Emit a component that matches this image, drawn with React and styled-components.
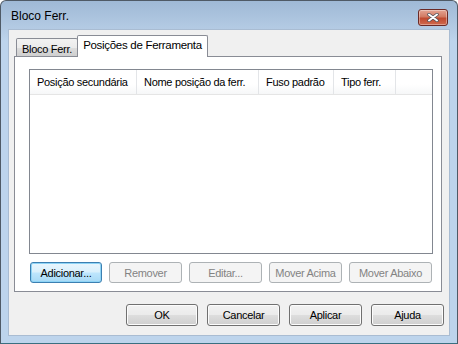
import styled, { createGlobalStyle, css } from 'styled-components';

const Global = createGlobalStyle`
  html, body { margin: 0; padding: 0; background: #ffffff; }
  body {
    font-family: "Liberation Sans", Arial, sans-serif;
    font-size: 11px;
    letter-spacing: -0.3px;
    color: #000;
  }
`;

const Window = styled.div`
  width: 458px;
  height: 344px;
  box-sizing: border-box;
  border: 1px solid #4f5a66;
  border-bottom-color: #3a6f80;
  border-radius: 6px 6px 0 0;
  background: linear-gradient(180deg, #9fb9d6 0px, #b4cbe4 28px, #bdd4ec 40px, #bdd4ec 100%);
  display: flex;
  flex-direction: column;
  overflow: hidden;
`;

const TitleBar = styled.div`
  height: 28px;
  display: flex;
  align-items: center;
  padding: 0 9px 0 10px;
  flex-shrink: 0;
`;

const Title = styled.div`
  flex: 1;
  font-size: 12px;
  letter-spacing: 0;
  padding-top: 2px;
  color: #000;
`;

const CloseButton = styled.div`
  width: 28px;
  height: 15px;
  margin-top: 4px;
  border: 1px solid #6b2a26;
  border-radius: 3px;
  background: linear-gradient(180deg, #e4a493 0%, #d27a62 45%, #c04a30 55%, #d06a4e 100%);
  box-shadow: inset 0 0 0 1px rgba(255,255,255,0.35);
  display: flex;
  align-items: center;
  justify-content: center;
`;

const Client = styled.div`
  flex: 1;
  margin: 0 7px 7px 7px;
  border: 1px solid #a9bcd2;
  background: #f0f0f0;
  display: flex;
  flex-direction: column;
  padding: 5px 5px 9px 5px;
`;

const TabStrip = styled.div`
  display: flex;
  align-items: flex-end;
  height: 21px;
  padding-left: 2px;
  position: relative;
  z-index: 1;
`;

const Tab = styled.div`
  box-sizing: border-box;
  border: 1px solid #898c95;
  border-bottom: none;
  border-radius: 2px 2px 0 0;
  display: flex;
  align-items: center;
  justify-content: center;
  white-space: nowrap;
  ${(p) => p.$active ? css`
    height: 22px;
    width: 131px;
    margin-left: -1px;
    margin-bottom: -1px;
    background: #ffffff;
    padding-bottom: 3px;
    font-size: 11.5px;
  ` : css`
    height: 18px;
    width: 62px;
    background: linear-gradient(180deg, #f2f2f2 0%, #ebebeb 50%, #dddddd 51%, #cfcfcf 100%);
    padding-top: 2px;
  `}
`;

const Panel = styled.div`
  height: 236px;
  box-sizing: border-box;
  border: 1px solid #898c95;
  background: #ffffff;
  width: 428px;
  padding: 12px 8px 0 14px;
  display: flex;
  flex-direction: column;
`;

const List = styled.div`
  height: 185px;
  box-sizing: border-box;
  border: 1px solid #828790;
  background: #fff;
`;

const Header = styled.div`
  display: flex;
  height: 24px;
  border-bottom: 1px solid #e5e5e5;
  background: linear-gradient(180deg, #ffffff 0%, #ffffff 60%, #f6f7f8 100%);
`;

const HeaderCell = styled.div`
  width: ${(p) => p.$w}px;
  box-sizing: border-box;
  border-right: 1px solid #e3e5e8;
  padding-left: 7px;
  display: flex;
  align-items: center;
  white-space: nowrap;
  overflow: hidden;
`;

const ButtonRow = styled.div`
  display: flex;
  gap: ${(p) => p.$gap}px;
  padding-left: ${(p) => p.$pl || 0}px;
  margin-top: ${(p) => p.$mt || 0}px;
  justify-content: ${(p) => p.$end ? 'flex-end' : 'flex-start'};
`;

const Button = styled.div`
  box-sizing: border-box;
  width: ${(p) => p.$w}px;
  height: ${(p) => p.$h || 21}px;
  border-radius: 3px;
  display: flex;
  align-items: center;
  justify-content: center;
  white-space: nowrap;
  border: 1px solid #707070;
  background: linear-gradient(180deg, #f2f2f2 0%, #ebebeb 48%, #dddddd 52%, #cfcfcf 100%);
  box-shadow: inset 0 0 0 1px #fcfcfc;
  color: #000;
  ${(p) => p.$disabled && css`
    border-color: #adb2b5;
    background: #f4f4f4;
    box-shadow: none;
    color: #838383;
  `}
  ${(p) => p.$focus && css`
    border-color: #3c7fb1;
    background: linear-gradient(180deg, #eaf6fd 0%, #d9f0fc 48%, #bee6fd 52%, #a7d9f5 100%);
    box-shadow: inset 0 0 0 1px #8ed4f6;
  `}
`;

const Footer = styled.div`
  margin-top: auto;
`;

const columns = [
  { label: 'Posição secundária', w: 107 },
  { label: 'Nome posição da ferr.', w: 122 },
  { label: 'Fuso padrão', w: 75 },
  { label: 'Tipo ferr.', w: 62 },
];

export default function App() {
  return (
    <>
      <Global />
      <Window>
        <TitleBar>
          <Title>Bloco Ferr.</Title>
          <CloseButton>
            <svg width="12" height="9" viewBox="0 0 12 9">
              <path d="M2 1.5 L10 7.5 M10 1.5 L2 7.5" stroke="#4a4f57" strokeWidth="3.4" strokeLinecap="round" />
              <path d="M2 1.5 L10 7.5 M10 1.5 L2 7.5" stroke="#ffffff" strokeWidth="2" strokeLinecap="round" />
            </svg>
          </CloseButton>
        </TitleBar>
        <Client>
          <TabStrip>
            <Tab>Bloco Ferr.</Tab>
            <Tab $active>Posições de Ferramenta</Tab>
          </TabStrip>
          <Panel>
            <List>
              <Header>
                {columns.map((c) => (
                  <HeaderCell key={c.label} $w={c.w}>{c.label}</HeaderCell>
                ))}
              </Header>
            </List>
            <ButtonRow $gap={7} $pl={1} $mt={8}>
              <Button $w={72} $focus>Adicionar...</Button>
              <Button $w={73} $disabled>Remover</Button>
              <Button $w={73} $disabled>Editar...</Button>
              <Button $w={73} $disabled>Mover Acima</Button>
              <Button $w={83} $disabled>Mover Abaixo</Button>
            </ButtonRow>
          </Panel>
          <Footer>
            <ButtonRow $gap={9} $end>
              <Button $w={72} $h={22}>OK</Button>
              <Button $w={73} $h={22}>Cancelar</Button>
              <Button $w={73} $h={22}>Aplicar</Button>
              <Button $w={73} $h={22}>Ajuda</Button>
            </ButtonRow>
          </Footer>
        </Client>
      </Window>
    </>
  );
}
